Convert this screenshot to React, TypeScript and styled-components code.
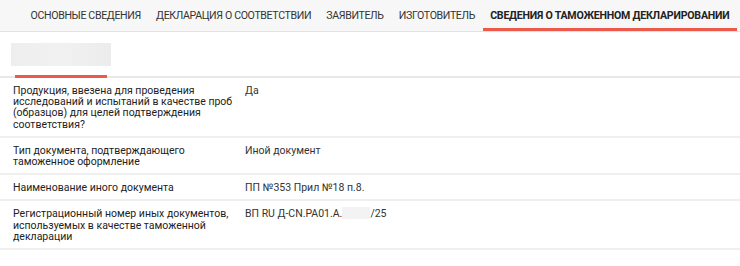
import React from "react";
import styled, { createGlobalStyle } from "styled-components";

const Global = createGlobalStyle`
  html, body { margin: 0; padding: 0; background: #ffffff; }
  body { font-family: Roboto, "Noto Sans", Arial, sans-serif; color: #222; }
`;

const Page = styled.div`
  width: 740px;
  display: flex;
  flex-direction: column;
`;

const TabBar = styled.nav`
  display: flex;
  height: 31px;
  padding-left: 23px;
  background: #f7f7f7;
  border-bottom: 1px solid #e2e2e2;
`;

const Tab = styled.div<{ $active?: boolean }>`
  display: flex;
  align-items: center;
  padding: 3px 7.6px 0;
  font-size: 10.6px;
  letter-spacing: ${(p) => (p.$active ? "-0.22px" : "-0.36px")};
  text-transform: uppercase;
  white-space: nowrap;
  color: ${(p) => (p.$active ? "#222" : "#333")};
  font-weight: ${(p) => (p.$active ? 700 : 400)};
  border-bottom: 3px solid ${(p) => (p.$active ? "#ec5a4c" : "transparent")};
`;

const SubBar = styled.div`
  display: flex;
  padding: 11px 0 0 11px;
  border-bottom: 2px solid #e8e8e8;
`;

const SubTab = styled.div`
  display: flex;
  flex-direction: column;
  align-items: center;
  gap: 9px;
  margin-bottom: -2px;
`;

const Redacted = styled.div<{ $w: number; $h: number }>`
  width: ${(p) => p.$w}px;
  height: ${(p) => p.$h}px;
  background: linear-gradient(90deg, #eeeeee, #f1f1f1 50%, #ececec);
`;

const SubUnderline = styled.div`
  width: 92px;
  height: 3px;
  background: #ec5a4c;
`;

const Table = styled.div`
  display: flex;
  flex-direction: column;
`;

const Row = styled.div`
  display: grid;
  grid-template-columns: 220px 1fr;
  column-gap: 12px;
  padding: 7px 13px 6px;
  border-bottom: 2px solid #efefef;
  font-size: 10.5px;
  line-height: 11.2px;
`;

const Label = styled.div`
  color: #222;
`;

const Value = styled.div`
  color: #333;
  display: flex;
  align-items: flex-start;
`;

const Blank = styled.span`
  display: inline-block;
  width: 28px;
  height: 12px;
  margin-top: -1px;
  background: #f3f3f3;
`;

const tabs = [
  "Основные сведения",
  "Декларация о соответствии",
  "Заявитель",
  "Изготовитель",
  "Сведения о таможенном декларировании",
];

export default function App() {
  return (
    <Page>
      <Global />
      <TabBar>
        {tabs.map((t, i) => (
          <Tab key={t} $active={i === tabs.length - 1}>
            {t}
          </Tab>
        ))}
      </TabBar>
      <SubBar>
        <SubTab>
          <Redacted $w={100} $h={23} />
          <SubUnderline />
        </SubTab>
      </SubBar>
      <Table>
        <Row>
          <Label>
            Продукция, ввезена для проведения исследований и испытаний в качестве проб (образцов) для целей подтверждения соответствия?
          </Label>
          <Value>Да</Value>
        </Row>
        <Row>
          <Label>Тип документа, подтверждающего таможенное оформление</Label>
          <Value>Иной документ</Value>
        </Row>
        <Row>
          <Label>Наименование иного документа</Label>
          <Value>ПП №353 Прил №18 п.8.</Value>
        </Row>
        <Row>
          <Label>
            Регистрационный номер иных документов, используемых в качестве таможенной декларации
          </Label>
          <Value>
            ВП RU Д-CN.PA01.А.<Blank />/25
          </Value>
        </Row>
      </Table>
    </Page>
  );
}
